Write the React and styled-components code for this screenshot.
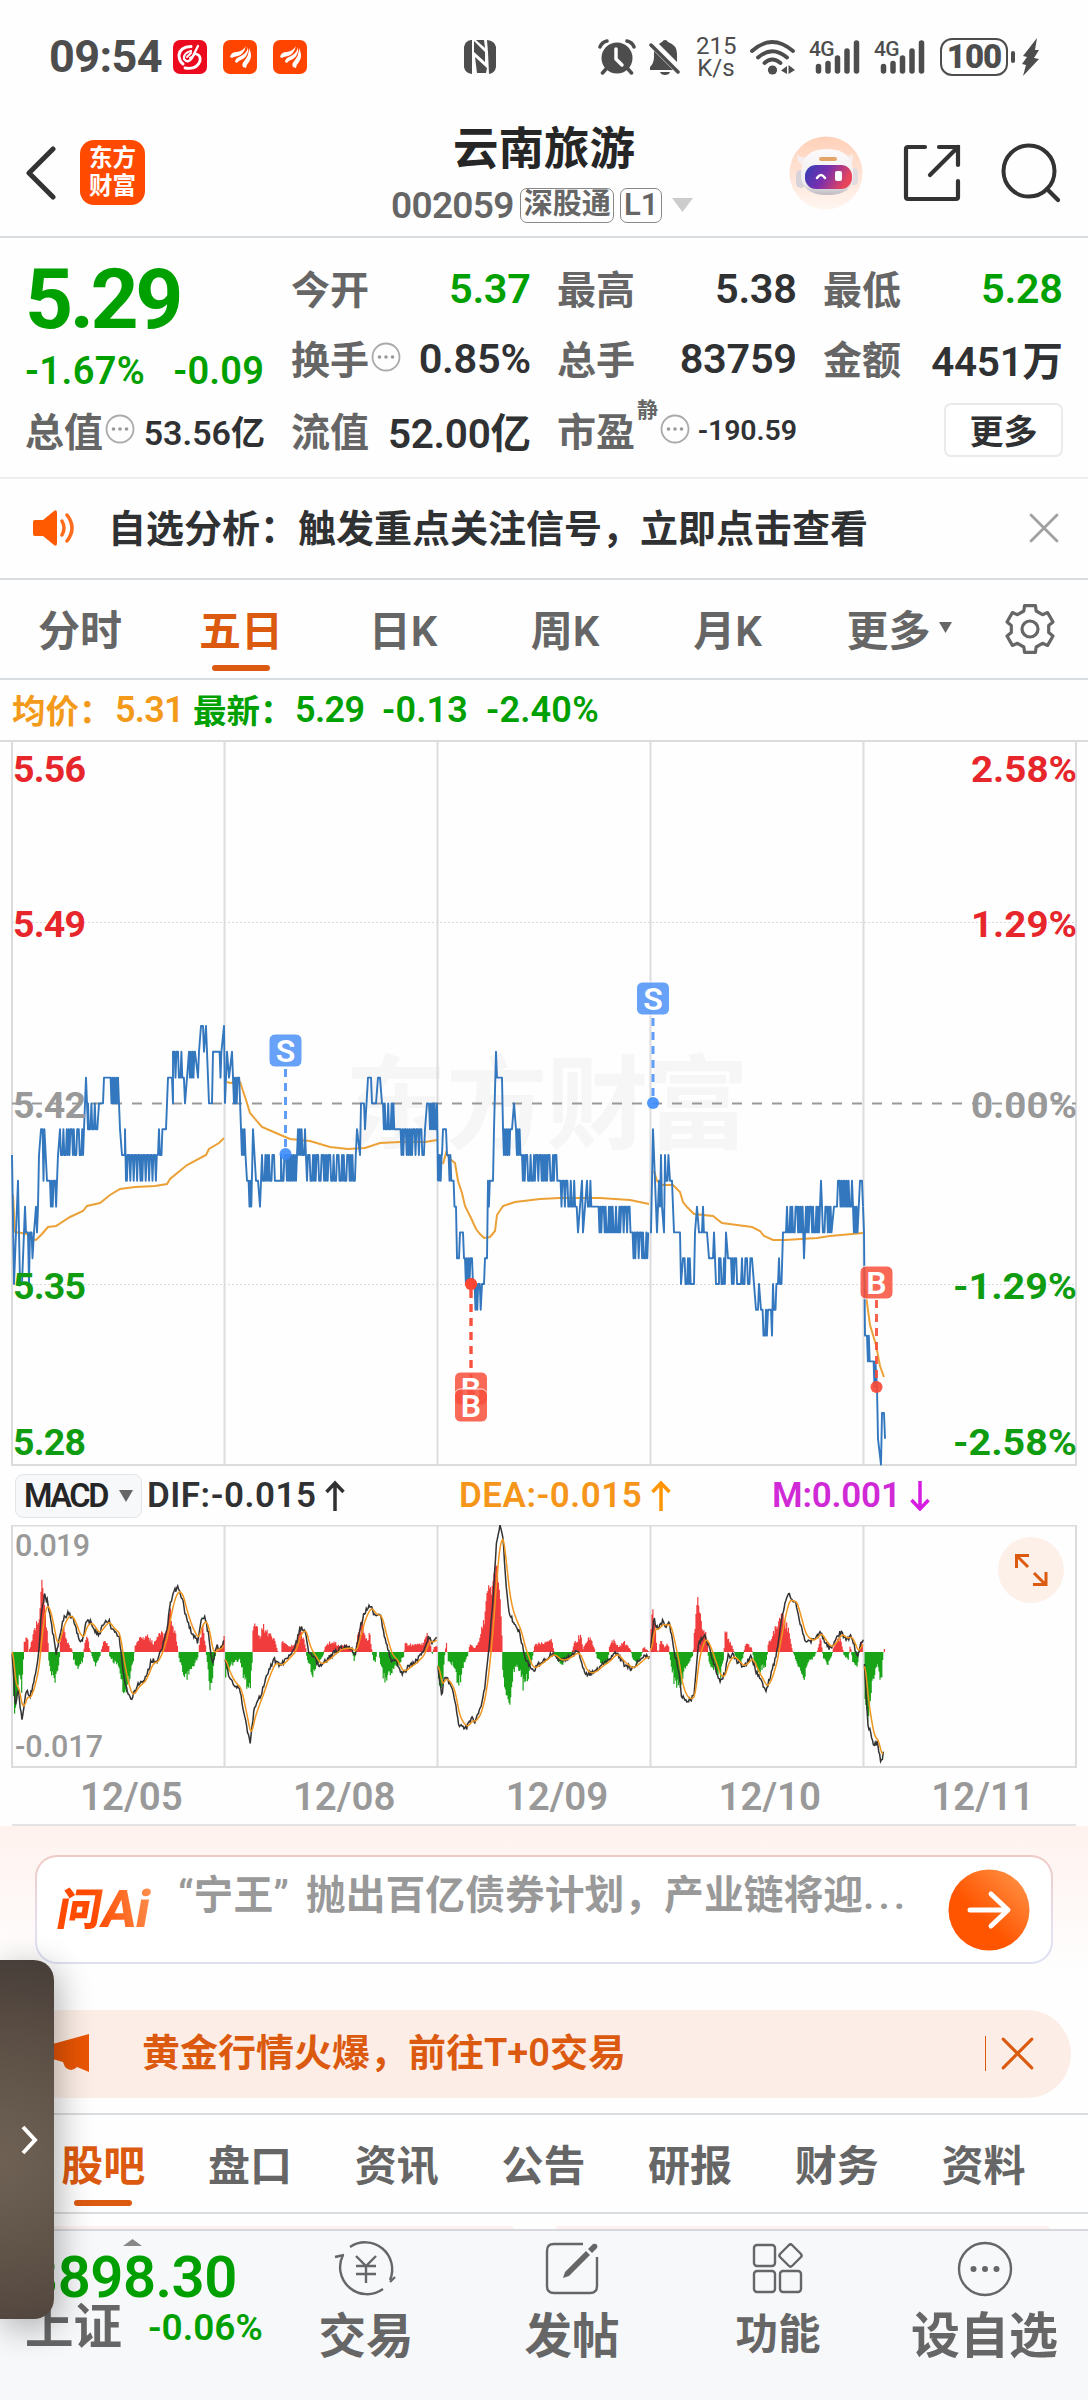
import React from "react"
import styled, { createGlobalStyle } from "styled-components"

const GlobalStyle = createGlobalStyle`
  body {
    margin: 0;
    background: #fefefe;
  }
  * {
    box-sizing: border-box;
  }
  svg {
    display: block;
    flex: none;
  }
`

const Screen = styled.div`
  position: relative;
  width: 1088px;
  height: 2400px;
  overflow: hidden;
  display: flex;
  flex-direction: column;
  background: #fefefe;
  color: #303133;
  font-family: Roboto, "Noto Sans CJK SC", sans-serif;
  font-weight: 600;
  white-space: nowrap;
`

const Num = styled.span`
  font-size: ${p => p.size}px;
  font-weight: ${p => p.weight || 600};
  letter-spacing: ${p => p.spacing || 0}px;
  margin-right: ${p => -(p.spacing || 0)}px;
  color: ${p => p.color || "inherit"};
`

/* ---------- status bar ---------- */

const StatusBar = styled.header`
  height: 114px;
  padding: 0 48px 0 50px;
  display: flex;
  align-items: center;
  color: #4d4d4d;
`

const Clock = styled.div`
  width: 124px;
  margin-left: -1px;
  padding-right: 1px;
  font-size: 45px;
  line-height: 48px;
  padding-bottom: 1px;
  font-weight: 700;
  letter-spacing: -0.6px;
`

const AppBadges = styled.div`
  display: flex;
  gap: 16px;
  width: 291px;
`

const StatusRight = styled.div`
  display: flex;
  align-items: center;
  margin-left: auto;
`

const Speed = styled.div`
  width: 40px;
  margin: 0 14px 0 15px;
  font-size: 24px;
  line-height: 22px;
  font-weight: 400;
  text-align: center;
`

const Battery = styled.div`
  position: relative;
  width: 68px;
  height: 38px;
  margin-left: 14px;
  border: 2.5px solid #4d4d4d;
  border-radius: 12px;
  font-size: 33px;
  line-height: 34px;
  font-weight: 900;
  text-align: center;
  letter-spacing: -1px;

  &::after {
    content: "";
    position: absolute;
    right: -9px;
    top: 11px;
    width: 4px;
    height: 12px;
    border-radius: 2px;
    background: #4d4d4d;
  }
`

function EastMoneyBadge() {
  return (
    <svg width="34" height="34" viewBox="0 0 34 34">
      <rect width="34" height="34" rx="7" fill="#ff4400" />
      <g fill="#fff">
        <path d="M7 17 Q8 12 14 12 Q20 11 23 6 Q21 14 15 16 Q10 17 9 18 Z" />
        <path d="M12 22 Q12 18 18 16 Q24 13 25 7 Q26 15 20 19 Q15 21 14 23 Z" />
        <path d="M20 27 Q18 24 22 20 Q26 15 26 8 Q30 16 26 22 Q23 25 23 28 Z" />
      </g>
    </svg>
  )
}

function RedBadge() {
  return (
    <svg width="34" height="34" viewBox="0 0 34 34">
      <rect width="34" height="34" rx="7" fill="#eb0a1e" />
      <g fill="none" stroke="#fff" strokeLinecap="round">
        <path d="M18 6.500 Q7 7 6 15 Q6 21 10 24" strokeWidth="3" />
        <path d="M18 11 Q10 13 11 19 Q15 24 19 18 L25 6" strokeWidth="2.300" />
        <path d="M14 17 L18 13 M17 18 Q22 16 22 12" strokeWidth="2" />
        <path d="M12 28 Q24 30 27 21 Q28 15 23 14" strokeWidth="2.800" />
      </g>
    </svg>
  )
}

function NfcIcon() {
  return (
    <svg width="32" height="34" viewBox="0 0 32 34">
      <path d="M7 0 H8 V34 Q1 33 0 27 V7 Q1 1 7 0 Z" fill="#4d4d4d" />
      <path d="M23 0 Q31 1 32 7 V27 Q31 33 25 34 L24 12 Z" fill="#4d4d4d" />
      <path d="M10 1 L21 12 V22 L10 12 Z M11 17 L23 28 L22 33 H13 Z" fill="#4d4d4d" />
      <path d="M12 0 H20 L21 8 Z" fill="#4d4d4d" />
    </svg>
  )
}

function AlarmIcon() {
  return (
    <svg width="38" height="36" viewBox="0 0 38 36">
      <circle cx="19" cy="19" r="15.500" fill="#4d4d4d" />
      <path d="M2 8 Q4 3 9 2 M36 8 Q34 3 29 2 M8 30 L4.500 34 M30 30 L33.500 34" stroke="#4d4d4d" strokeWidth="3.500" strokeLinecap="round" fill="none" />
      <path d="M18 10 V20 L24 26" stroke="#fff" strokeWidth="3.500" strokeLinecap="round" fill="none" />
    </svg>
  )
}

function BellOffIcon() {
  return (
    <svg width="32" height="36" viewBox="0 0 32 36">
      <path d="M10 5 Q11 4 13 3 Q14 1 16 1 Q18 1 19 3 Q28 6 28 15 V23 Z" fill="#4d4d4d" />
      <path d="M5 12 L24 31 H1 V28 Q5 24 5 18 Z M11 33 H21 Q20 36 16 36 Q12 36 11 33 Z" fill="#4d4d4d" />
      <path d="M2 6 L29 33" stroke="#4d4d4d" strokeWidth="3.500" strokeLinecap="round" />
    </svg>
  )
}

function WifiIcon() {
  return (
    <svg width="46" height="36" viewBox="0 0 46 36">
      <g fill="none" stroke="#4d4d4d" strokeWidth="3.800" strokeLinecap="round">
        <path d="M2 12 Q22 -6 43 12" />
        <path d="M8 18.500 Q22 6 37 18.500" />
        <path d="M14.500 24 Q22 17 30.500 24" />
      </g>
      <circle cx="22.500" cy="31" r="4.600" fill="#4d4d4d" />
      <path d="M31 31.500 L37 27 V35 Z M38.500 26 L45 31 L38.500 35 Z" fill="#4d4d4d" />
    </svg>
  )
}

const Cellular = styled.div`
  display: flex;
  width: 52px;
  height: 36px;
  margin-left: 13px;
  font-size: 21px;
  line-height: 21px;
  font-weight: 500;
  letter-spacing: -0.8px;

  svg {
    margin-left: -20px;
  }
`

function Signal() {
  return (
    <Cellular>
      4G
      <svg width="46" height="36" viewBox="6 0 46 36">
        <g stroke="#4d4d4d" strokeWidth="5.500" strokeLinecap="round">
          <path d="M10.500 27.500 V32 M20 24.500 V32 M29.500 19 V32 M39 12 V32 M48.500 4 V32" />
        </g>
      </svg>
    </Cellular>
  )
}

function Status() {
  return (
    <StatusBar>
      <Clock>09:54</Clock>
      <AppBadges>
        <RedBadge />
        <EastMoneyBadge />
        <EastMoneyBadge />
      </AppBadges>
      <NfcIcon />
      <StatusRight>
        <AlarmIcon />
        <svg width="13" height="1" />
        <BellOffIcon />
        <Speed>215<br />K/s</Speed>
        <WifiIcon />
        <Signal />
        <Signal />
        <Battery>100</Battery>
        <svg width="18" height="38" viewBox="0 0 18 38" style={{ marginLeft: 14 }}>
          <path d="M15 0 L1 18 L5 19 L0 26 L4 27 L1 38 L17 21 L12 20 L17 12 L13 12 Z" fill="#4d4d4d" />
        </svg>
      </StatusRight>
    </StatusBar>
  )
}

/* ---------- title bar ---------- */

const TitleBar = styled.div`
  height: 124px;
  border-bottom: 2px solid #dadddf;
  display: grid;
  grid-template-columns: 366px 1fr 366px;
`

const TitleSide = styled.div`
  display: flex;
  align-items: center;
  height: 117px;
  padding: 0 ${p => (p.end ? 27 : 0)}px 0 ${p => (p.end ? 0 : 25)}px;
  justify-content: ${p => (p.end ? "flex-end" : "flex-start")};
  gap: ${p => (p.end ? 40 : 23)}px;
`

const Logo = styled.div`
  width: 65px;
  height: 65px;
  border-radius: 14px;
  background: #ff4a00;
  color: #fff;
  font-size: 23.500px;
  line-height: 28px;
  font-weight: 700;
  text-align: center;
  padding-top: 4px;
`

const TitleText = styled.div`
  text-align: center;
  font-size: 45.500px;
  line-height: 60px;
  font-weight: 700;
  color: #262626;
  margin-top: 6px;
`

const CodeRow = styled.div`
  display: flex;
  align-items: center;
  height: 36px;
  margin-top: 7px;
  padding-left: 25px;
  color: #666;
`

const Tag = styled.span`
  height: 35px;
  width: ${p => p.w}px;
  margin-left: 6px;
  border: 1.500px solid #888;
  border-radius: 7px;
  font-size: ${p => p.size || 29}px;
  line-height: ${p => (p.size ? 32 : 30)}px;
  text-align: center;
`

function Header() {
  return (
    <TitleBar>
      <TitleSide>
        <svg width="32" height="54" viewBox="0 0 32 54">
          <path d="M28 3 L4 27 L28 51" fill="none" stroke="#333" strokeWidth="5" strokeLinecap="round" strokeLinejoin="round" />
        </svg>
        <Logo>东方<br />财富</Logo>
      </TitleSide>
      <div>
        <TitleText>云南旅游</TitleText>
        <CodeRow>
          <Num size={37} spacing={-0.7}>002059</Num>
          <Tag w={94}>深股通</Tag>
          <Tag w={42} size={31}>L1</Tag>
          <svg width="21" height="14" viewBox="0 0 21 14" style={{ marginLeft: 10 }}>
            <path d="M0 0 H21 L10.500 14 Z" fill="#ccc" />
          </svg>
        </CodeRow>
      </div>
      <TitleSide end>
        <svg width="74" height="74" viewBox="0 0 74 74">
          <defs>
            <linearGradient id="halo" x1="0" y1="0" x2="0" y2="1">
              <stop offset="0" stopColor="#ffd0b8" />
              <stop offset="1" stopColor="#fff6f1" />
            </linearGradient>
            <linearGradient id="visor" x1="0" y1="0" x2="1" y2="0.300">
              <stop offset="0" stopColor="#2f3fb4" />
              <stop offset="0.500" stopColor="#7a2fae" />
              <stop offset="1" stopColor="#e8455a" />
            </linearGradient>
            <linearGradient id="helmet" x1="0" y1="0" x2="0" y2="1">
              <stop offset="0" stopColor="#fcfafa" />
              <stop offset="0.750" stopColor="#efecee" />
              <stop offset="1" stopColor="#bdb9c0" />
            </linearGradient>
          </defs>
          <circle cx="37" cy="37" r="36.500" fill="url(#halo)" />
          <path d="M8 18 Q7 28 16 29 L22 20 Q12 24 8 18 Z M63 17 Q66 27 60 30 L54 20 Q61 22 63 17 Z" fill="#f6eeee" />
          <rect x="7" y="34" width="10" height="18" rx="5" fill="#d8d3d8" />
          <rect x="60" y="32" width="9" height="17" rx="4" fill="#e2dce0" />
          <path d="M12 38 Q12 13 38 13 Q64 13 64 37 Q66 59 38 59 Q12 59 12 38 Z" fill="url(#helmet)" />
          <rect x="30" y="21" width="18" height="4" rx="2" fill="#e2a468" />
          <rect x="16" y="29" width="47" height="24" rx="11" fill="url(#visor)" />
          <path d="M28 42 Q32 36 36 42" stroke="#fff" strokeWidth="2.500" fill="none" strokeLinecap="round" />
          <rect x="46" y="35" width="7" height="10" rx="2" fill="#fff" />
        </svg>
        <svg width="58" height="58" viewBox="0 0 58 58">
          <path d="M22 3 H5 Q3 3 3 5 V53 Q3 55 5 55 H53 Q55 55 55 53 V37 M36 3 H55 V21 M55 3 L27 31" fill="none" stroke="#333" strokeWidth="4.200" strokeLinecap="round" />
        </svg>
        <svg width="60" height="60" viewBox="0 0 60 60">
          <circle cx="28" cy="28" r="25.500" fill="none" stroke="#333" strokeWidth="4" />
          <path d="M46 46 L57 57" stroke="#333" strokeWidth="4.200" strokeLinecap="round" />
        </svg>
      </TitleSide>
    </TitleBar>
  )
}

/* ---------- quote block ---------- */

const GREEN = "#00a000"

const QuoteGrid = styled.section`
  height: 241px;
  border-bottom: 2px solid #edefef;
  padding: 15px 24px 0 25px;
  display: grid;
  grid-template-columns: 240px 240px 240px 240px;
  column-gap: 26px;
  grid-template-rows: 70px 72px 72px;
`

const Cell = styled.div`
  display: flex;
  align-items: center;
  justify-content: space-between;
  height: 70px;
`

const Label = styled.span`
  display: flex;
  align-items: center;
  gap: 2px;
  font-size: 39px;
  padding-bottom: 3px;
  color: #666;
`

const Super = styled.sup`
  align-self: flex-start;
  margin-top: -2px;
  font-size: 21px;
  line-height: 22px;
`

const Price = styled.div`
  grid-row: 1 / 2;
  font-size: 84px;
  line-height: 93px;
  font-weight: 700;
  letter-spacing: -3.500px;
  color: ${GREEN};
`

const Change = styled.div`
  display: flex;
  justify-content: space-between;
  align-items: center;
  padding: 23px 1px 0 0;
  color: ${GREEN};
`

const MoreButton = styled.button`
  width: 119px;
  height: 54px;
  margin-left: auto;
  padding: 0 0 6px;
  border: 2px solid #e9eaeb;
  border-radius: 7px;
  background: #fff;
  color: #303133;
  font: inherit;
  font-size: 34px;
`

function Dots() {
  return (
    <svg width="30" height="30" viewBox="0 0 30 30">
      <circle cx="15" cy="15" r="13.500" fill="none" stroke="#aaa" strokeWidth="1.800" />
      <circle cx="8.500" cy="15" r="1.800" fill="#999" />
      <circle cx="15" cy="15" r="1.800" fill="#999" />
      <circle cx="21.500" cy="15" r="1.800" fill="#999" />
    </svg>
  )
}

function Stat({ label, value, color, size = 41.5, spacing = -0.3, dots, sup }) {
  return (
    <Cell>
      <Label>
        {label}
        {sup && <Super>{sup}</Super>}
        {dots && <Dots />}
      </Label>
      <Num size={size} spacing={spacing} color={color}>{value}</Num>
    </Cell>
  )
}

function Quote() {
  return (
    <QuoteGrid>
      <Price>5.29</Price>
      <Stat label="今开" value="5.37" color={GREEN} />
      <Stat label="最高" value="5.38" />
      <Stat label="最低" value="5.28" color={GREEN} />
      <Change>
        <Num size={38} spacing={0.4}>-1.67%</Num>
        <Num size={38} spacing={0.2}>-0.09</Num>
      </Change>
      <Stat label="换手" value="0.85%" dots />
      <Stat label="总手" value="83759" />
      <Stat label="金额" value="4451万" size={40.5} />
      <Stat label="总值" value="53.56亿" size={34} spacing={0} dots />
      <Stat label="流值" value="52.00亿" size={40.5} />
      <Stat label="市盈" value="-190.59" size={28.5} spacing={-0.1} sup="静" dots />
      <Cell>
        <MoreButton>更多</MoreButton>
      </Cell>
    </QuoteGrid>
  )
}

/* ---------- notice ---------- */

const NoticeBar = styled.div`
  height: 101px;
  border-bottom: 2px solid #dadddf;
  padding: 0 29px 1px 32px;
  display: flex;
  align-items: center;
  font-size: 38px;
`

const NoticeText = styled.span`
  flex: 1;
  margin-left: 32px;
  padding-bottom: 6px;
`

function CloseIcon({ size, color, weight }) {
  return (
    <svg width={size} height={size} viewBox="0 0 30 30">
      <path d="M2 2 L28 28 M28 2 L2 28" stroke={color} strokeWidth={weight} strokeLinecap="round" />
    </svg>
  )
}

function Notice() {
  return (
    <NoticeBar>
      <svg width="44" height="38" viewBox="0 0 44 38">
        <path d="M3 11 H11 L22 2 Q25 0 25 4 V34 Q25 38 22 36 L11 27 H3 Q1 27 1 25 V13 Q1 11 3 11 Z" fill="#ff5a00" />
        <path d="M30 12 Q34 19 30 26 M35 6 Q45 19 35 32" stroke="#ff6d1c" strokeWidth="3.500" fill="none" strokeLinecap="round" />
      </svg>
      <NoticeText>自选分析：触发重点关注信号，立即点击查看</NoticeText>
      <CloseIcon size={30} color="#a0a0a0" weight={2.8} />
    </NoticeBar>
  )
}

/* ---------- chart tabs ---------- */

const ChartTabs = styled.nav`
  height: 100px;
  border-bottom: 2px solid #dadddf;
  display: grid;
  grid-template-columns: 160px 162px 162px 162px 163px 180px 82px;
  align-items: center;
`

const Tab = styled.div`
  position: relative;
  height: 98px;
  display: flex;
  align-items: center;
  justify-content: center;
  font-size: 42px;
  padding-bottom: 3px;
  color: ${p => (p.active ? "#dc5a10" : "#666")};
  font-weight: ${p => (p.active ? 700 : 600)};

  &::after {
    content: "";
    display: ${p => (p.active ? "block" : "none")};
    position: absolute;
    bottom: 7px;
    left: 50%;
    margin-left: -29px;
    width: 58px;
    height: 6px;
    border-radius: 3px;
    background: #dc5a10;
  }
`

function gearPath() {
  const pts = []
  for (let i = 0; i < 6; i++) {
    const a = -90 + i * 60
    ;[[-13, 24], [13, 24], [19, 19], [41, 19]].forEach(([d, r]) => {
      const t = ((a + d) * Math.PI) / 180
      pts.push(`${(26 + r * Math.cos(t)).toFixed(1)},${(26 + r * Math.sin(t)).toFixed(1)}`)
    })
  }
  return pts.join(" ")
}

function Periods() {
  return (
    <ChartTabs>
      <Tab>分时</Tab>
      <Tab active>五日</Tab>
      <Tab>日K</Tab>
      <Tab>周K</Tab>
      <Tab>月K</Tab>
      <Tab>
        更多
        <svg width="13" height="11" viewBox="0 0 13 11" style={{ marginLeft: 8 }}>
          <path d="M0 0 H13 L6.500 11 Z" fill="#666" />
        </svg>
      </Tab>
      <svg width="52" height="52" viewBox="0 0 52 52" style={{ marginLeft: 15 }}>
        <polygon points={gearPath()} fill="none" stroke="#666" strokeWidth="3.200" strokeLinejoin="round" />
        <circle cx="26" cy="26" r="8" fill="none" stroke="#666" strokeWidth="3.200" />
      </svg>
    </ChartTabs>
  )
}

const Legend = styled.div`
  height: 60px;
  padding: 0 12px;
  display: flex;
  align-items: center;
  font-size: 33.500px;
  color: ${GREEN};
`

const LegendLabel = styled.span`
  width: ${p => p.w}px;
  padding-bottom: ${p => p.lift || 0}px;
  color: ${p => p.color || "inherit"};
`

/* ---------- price chart ---------- */

// price runs: x, cents above 5.00; "x1~x2 hi lo" is a stretch where the price flickers between two ticks
const PRICE_RUNS = [
  "12 40,14 35,18 39,20 35,22 35,25 38,26 37,28 37,29 35,30~33 37 36,34 37,36 38,37 37,38 38,39 40,41 41,41~45 41 39,47 39,49 39,50~57 39 38,58 40,60~84 41 40,84 41,86 43,88 41,88~98 42 41,99 42,103 42,104 43,109 43,109~118 43 42,118 43,120 41,122 40,125 40,125 41,126 39,126~157 40 39,158 40,159~163 41 40,164 41,166 41,168 43,172 43,173 42,173~184 44 43,185 42,187 43,189~195 44 43,198 43,199 44,201 45,203 45,204 44,206 45,207 44,209 42,212 42,213 44,217 44,218~222 44 43,224 45,225 42",
  "225 42,227 44,229 43,232 44,234 42,234~240 43 42,241~246 41 40,247~252 39 38,253 41,256 39,258 39,260 38,262~275 40 39,276 39,281 39,281~295 40 39,296 39,298~306 41 40,307 39,308~356 40 39,357 41,360 40,361 42,364 42,365 41,368 43,371 43,372 42,376 42,378 43,380 43,382 42,383~395 42 41,395 41,398 41,399~424 41 40,425 41,427 42,429 42,430 41,431~436 42 41,437 42,438 39",
  "438 39,438~442 40 39,443 41,446 41,447~452 40 39,452~456 39 38,457 36,459 36,460 37,463 37,464 36,465~472 36 35,473~481 35 34,482 35,484 35,485 36,487 36,488~492 39 38,493 39,494 41,496 44,497 43,502 43,503~511 41 40,512 41,514 42,516 41,516~521 41 40,522~558 40 39,559~577 39 38,578 37,580 38,582 39,583 37,585 38,587~593 39 38,597~631 38 37,631~649 37 36",
  "650 37,651 37,653 41,656 38,657 37,659 39,660 38,661 40,662 38,664 37,665~669 40 39,670 39,672 39,673 38,674 37,680 37,681 35,683~691 36 35,694 35,695 37,697 38,699 37,702 37,703~706 38 37,707 37,709 36,713 36,714 37,716 35,719 35,719~725 36 35,726 37,728 36,731 36,731~738 36 35,741 35,742~752 36 35,754 35,756 34,758 34,759 35,761 34,761~767 34 33,768 34,771 34,772 33,773~777 35 34,778 35,779~782 36 35,783 37,786 37,787~803 38 37,804 36,806~820 38 37,821 39,822~832 38 37,834 38,837 38,838~852 39 38,853~858 38 37,860 39,862 39,863 38",
  "863 38,864 37,865 33,867 33,867~872 33 32,872~876 32 31,877 31,878 29,881 28,882 30,884 30,885 29",
]

const AVERAGES = [
  "13,1195 15,1232 27,1234 31,1239 36,1240 42,1234 48,1227 56,1226 70,1217 83,1211 87,1206 100,1203 110,1195 120,1189 135,1187 155,1186 167,1184 170,1179 187,1165 206,1155 209,1149 219,1143 224,1138",
  "227,1082 230,1083 240,1082 246,1100 250,1113 262,1127 276,1133 290,1139 310,1141 330,1147 348,1149 365,1148 380,1143 400,1142 425,1142 437,1140",
  "443,1164 446,1153 450,1159 455,1163 458,1181 462,1193 465,1206 471,1218 476,1229 480,1234 484,1238 490,1237 495,1231 497,1215 503,1206 515,1202 540,1199 560,1198 600,1198 630,1200 649,1204",
  "654,1171 657,1181 662,1185 673,1185 680,1192 683,1202 687,1207 694,1214 713,1216 722,1223 752,1227 760,1231 764,1236 773,1240 785,1240 817,1238 830,1236 863,1233",
  "864,1275 867,1303 870,1325 876,1345 880,1366 884,1377",
]

const priceY = cents => 1103.4 - (cents - 42) * 25.8

// small repeatable noise so that the runs look the same on each render
const noise = n => {
  const v = Math.sin(n * 12.9898) * 43758.5453
  return v - Math.floor(v)
}

function pricePoints(runs) {
  const out = []
  runs.split(",").forEach(run => {
    const parts = run.split(" ")
    if (!parts[0].includes("~")) {
      out.push([Number(parts[0]), Number(parts[1])])
      return
    }
    const [from, to] = parts[0].split("~").map(Number)
    let up = true
    for (let x = from; x <= to; ) {
      out.push([x, Number(up ? parts[1] : parts[2])])
      const hold = noise(x) > 0.72 ? 1.6 : 0
      if (hold) out.push([Math.min(to, x + hold), Number(up ? parts[1] : parts[2])])
      x += 0.9 + hold
      up = !up
    }
  })
  return out.map(([x, c]) => `${x.toFixed(1)},${priceY(c).toFixed(1)}`).join(" ")
}

const DAY_LINES = [224.5, 437.5, 650.5, 863.5]

const AXIS = [
  ["5.56", "2.58%", 782, "#e6262b"],
  ["5.49", "1.29%", 937, "#e6262b"],
  ["5.42", "0.00%", 1117.5, "#999"],
  ["5.35", "-1.29%", 1298.5, "#109c10"],
  ["5.28", "-2.58%", 1454.5, "#109c10"],
]

function TradeMark({ kind, x, y, dot, from, to }) {
  const color = kind === "S" ? "#4f93f7" : "#f8503c"
  return (
    <g>
      <path d={`M${x} ${from} V${to}`} stroke={color} strokeWidth="3" strokeDasharray="8 6" opacity="0.9" />
      <circle cx={x} cy={dot} r="6" fill={kind === "S" ? "#3c8cfa" : "#fa4632"} opacity="0.9" />
      <rect x={x - 16.500} y={y} width="33" height="33" rx="6" fill={color} opacity="0.850" stroke="#fff" strokeWidth="1" />
      <text x={x} y={y + 28} textAnchor="middle" fontSize="32" fontWeight="600" fill="#fff">{kind}</text>
    </g>
  )
}

function PriceChart() {
  return (
    <svg width="1088" height="726" viewBox="0 740 1088 726">
      <text x="547" y="1141" textAnchor="middle" fontSize="102" fontWeight="700" fill="#f6f6f7" textLength="404">东方财富</text>
      <g stroke="#dcdcde" strokeWidth="2" fill="none">
        <path d="M0 741 H1088" />
        <path d="M12 741 V1465 H1076 V741" />
        {DAY_LINES.map(x => <path key={x} d={`M${x} 741 V1465`} />)}
      </g>
      <g stroke="#d9d9d9" strokeWidth="1" strokeDasharray="2 2">
        <path d="M12 922.500 H1076 M12 1284.500 H1076" />
      </g>
      <path d="M12 1103.500 H1076" stroke="#999" strokeWidth="2" strokeDasharray="10 10" />
      <g fill="none" stroke="#eba136" strokeWidth="2">
        {AVERAGES.map(p => <polyline key={p} points={p} />)}
      </g>
      <g fill="none" stroke="#3377be" strokeWidth="1.900" strokeLinejoin="round">
        {PRICE_RUNS.map(r => <polyline key={r} points={pricePoints(r)} />)}
      </g>
      <g fontSize="37.500" fontWeight="700">
        {AXIS.map(([price, pct, y, color]) => (
          <g key={price} fill={color}>
            <text x="13" y={y} textLength="73">{price}</text>
            <text x="1077" y={y} textAnchor="end" textLength={pct[0] === "-" ? 124 : 106} lengthAdjust="spacingAndGlyphs">{pct}</text>
          </g>
        ))}
      </g>
      <TradeMark kind="S" x={285.5} y={1034} from={1069} to={1150} dot={1154} />
      <TradeMark kind="S" x={653} y={982} from={1018} to={1100} dot={1103} />
      <TradeMark kind="B" x={471} y={1372} from={1290} to={1390} dot={1284} />
      <TradeMark kind="B" x={471} y={1389} from={1290} to={1372} dot={1284} />
      <TradeMark kind="B" x={876.5} y={1266} from={1300} to={1382} dot={1387} />
    </svg>
  )
}

/* ---------- macd ---------- */

const MacdRow = styled.div`
  height: 59px;
  padding-left: 15px;
  display: grid;
  grid-template-columns: 132px 312px 313px 1fr;
  align-items: center;
`

const MacdSelect = styled.div`
  width: 127px;
  height: 44px;
  border: 1.500px solid #e3e5e8;
  border-radius: 8px;
  background: #f7f8fa;
  display: flex;
  align-items: center;
  justify-content: center;
  gap: 12px;
  font-size: 32.500px;
  letter-spacing: -2.400px;
  color: #262626;
`

const MacdValue = styled.div`
  display: flex;
  align-items: center;
  gap: 9px;
  font-size: 35px;
  letter-spacing: ${p => p.spacing || 0.5}px;
  color: ${p => p.color};
`

function Arrow({ down, color }) {
  return (
    <svg width="20" height="31" viewBox="0 0 20 31">
      <path d={down ? "M10 1 V29 M1.500 20 L10 29 L18.500 20" : "M10 31 V3 M1.500 12 L10 3 L18.500 12"} fill="none" stroke={color} strokeWidth="3.500" />
    </svg>
  )
}

// samples "x:y" on the plot raster, y = 577 is the zero line; left and right half have their own raster
const DIF = [
  ["L", "34:577 43:743 51:690 61:778 75:690 83:718 97:655 108:590 115:470 125:407 133:425 145:500 158:585 165:545 176:478 193:460 205:480 222:540 234:535 241:480 256:490 275:528 290:495 303:480 316:512 333:525 345:640 355:690 368:722 385:675 405:660 425:600 440:605 455:560 467:510 478:425 490:390 500:385 512:420 520:470 535:515 553:545 565:478 575:475 583:520 595:612 608:560 618:570 628:535"],
  ["L", "630:600 640:650 655:675 672:690 685:770 700:853 712:745 722:725 735:690 750:640 768:600 785:620 800:600 825:570 840:505 855:510 865:580 880:595 895:620 915:600 935:580 955:565 980:565 995:580 1005:520 1020:460 1037:435 1050:470 1066:470 1080:550 1095:600 1110:605 1125:645 1145:620 1165:605 1185:580 1200:530 1212:550 1224:530"],
  ["L", "1226:620 1237:710 1245:645 1258:670 1270:700 1284:795 1307:805 1320:775 1330:785 1345:750 1358:680 1368:580 1380:420 1390:250 1399:195 1408:230 1415:350 1425:460 1440:490 1455:520 1470:590 1490:635 1510:612 1530:595 1548:580 1568:605 1583:600 1612:578 1620:578 1632:620 1640:645 1660:640 1685:615 1700:605 1725:578 1745:612 1770:628 1785:610 1808:588 1830:605 1848:642 1860:625 1819:632"],
  ["R", "317:570 325:475 337:510 350:485 360:500 370:490 385:580 397:640 405:710 424:725 440:710 447:620 453:550 473:525 485:570 500:620 515:665 528:645 537:590 552:585 565:605 580:625 605:590 620:640 647:690 660:650 675:590 690:490 700:440 712:400 722:425 733:430 742:480 757:540 780:545 803:515 815:550 830:568 845:545 861:515 875:540 890:530 908:590 920:545 925:545"],
  ["R", "928:620 938:790 955:860 965:845 976:912 984:870"],
]

const BARS = [
  ["L", "36:600 40:780 48:700 56:640 60:700 66:600 68:540 78:530 80:577 85:560 100:490 110:480 117:355 123:400 130:490 135:545 137:600 145:650 152:682 160:650 167:590 168:540 176:500 185:530 195:560 203:572 205:600 222:632 233:600 236:560 243:520 250:560 258:590 268:620 280:590 288:550 297:540 305:560 307:590 318:610 330:620 345:710 355:690 365:655 374:600 378:560 390:530 415:525 430:550 450:515 465:520 475:450 485:490 495:540 502:600 518:665 530:650 545:615 555:590 560:530 568:495 575:550 580:610 590:700 600:610 608:550 612:575 628:530"],
  ["L", "632:650 645:625 655:610 672:600 685:670 700:690 706:620 709:490 717:475 725:530 738:500 755:520 772:545 778:577 788:577 790:545 810:560 830:550 840:500 855:550 858:590 875:650 890:610 905:590 910:560 930:540 950:555 970:555 985:570 993:610 1000:530 1015:485 1025:540 1035:520 1040:560 1045:600 1052:610 1055:577 1062:577 1065:620 1080:680 1095:640 1115:620 1130:590 1135:550 1160:555 1185:550 1198:510 1205:550 1210:590 1215:560 1224:560"],
  ["L", "1228:680 1237:700 1243:610 1250:545 1255:610 1270:620 1285:685 1300:610 1310:590 1315:550 1330:565 1340:540 1355:480 1368:355 1376:390 1390:290 1398:370 1405:500 1409:680 1428:740 1437:640 1450:620 1466:690 1480:650 1490:600 1498:550 1520:550 1545:540 1550:570 1555:590 1562:590 1568:577"],
  ["R", "5:560 20:540 35:548 42:590 60:620 75:600 90:590 97:550 118:520 122:570 140:530 152:550 158:575 165:600 190:620 196:590 200:550 213:540 225:560 240:545 260:570 265:600 280:610 290:590 296:560 314:577"],
  ["R", "318:500 323:440 330:510 336:577 340:577 345:535 355:560 368:550 372:600 388:690 400:680 410:650 425:610 438:590 441:520 451:405 460:480 475:520 480:560 483:610 490:640 500:620 515:660 525:600 530:510 545:545 555:575 560:590 575:615 583:580 588:550 605:560 612:600 625:640 645:620 650:590 653:550 670:510 685:480 693:455 705:490 715:520 722:570 732:600 745:640 756:660 770:610 785:590 795:570 803:530 808:577 812:600 822:620 835:590 840:560 858:530 865:560 870:590 882:600 888:555 895:610 908:630 912:580 918:540 923:560"],
  ["R", "930:720 938:790 948:700 958:650 965:610 976:680 981:600 984:565"],
]

function readSamples([side, text]) {
  let last = -1
  return text
    .split(" ")
    .map(s => s.split(":").map(Number))
    .filter(([x]) => {
      if (x < last) return false
      last = x
      return true
    })
    .map(([x, y]) => [side === "L" ? x / 2.8 : 540 + x / 2.861, (577 - y) / 3])
}

function valueAt(points, x) {
  for (let i = 1; i < points.length; i++) {
    const [x0, v0] = points[i - 1]
    const [x1, v1] = points[i]
    if (x <= x1) return v0 + ((v1 - v0) * (x - x0)) / (x1 - x0 || 1)
  }
  return points[points.length - 1][1]
}

const ZERO = 1652

function macdLines(series) {
  const points = readSamples(series)
  const start = points[0][0]
  const lastX = points[points.length - 1][0]
  const end = start < 440 ? Math.min(lastX, 649.5) : lastX
  const dif = []
  const dea = []
  let smooth = points[0][1]
  for (let x = start; x <= end; x += 0.9) {
    const v = valueAt(points, x)
    smooth += (v - smooth) * 0.24
    dif.push(`${x.toFixed(1)},${(ZERO - v - (noise(x) - 0.5) * 5).toFixed(1)}`)
    dea.push(`${x.toFixed(1)},${(ZERO - smooth).toFixed(1)}`)
  }
  return { dif: dif.join(" "), dea: dea.join(" ") }
}

function macdBars(series) {
  const points = readSamples(series)
  let red = ""
  let green = ""
  for (let x = points[0][0]; x <= points[points.length - 1][0] + 0.5; x += 0.88) {
    const v = valueAt(points, x)
    const h = v * (Math.abs(v) > 40 ? 0.9 + noise(x) * 0.1 : 0.7 + noise(x) * 0.4)
    const bar = `M${x.toFixed(1)} ${ZERO} V${(ZERO - h).toFixed(1)}`
    if (v > 0) red += bar
    else green += bar
  }
  return { red, green }
}

const lines = DIF.map(macdLines)
const bars = BARS.map(macdBars)

function MacdChart() {
  return (
    <svg width="1088" height="243" viewBox="0 1525 1088 243">
      <g stroke="#dcdcde" strokeWidth="2" fill="none">
        <path d="M12 1525.500 H1076 V1767 H12 Z" />
        {DAY_LINES.map(x => <path key={x} d={`M${x} 1525 V1767`} />)}
      </g>
      {bars.map((b, i) => (
        <g key={i} strokeWidth="1.200">
          <path d={b.red} stroke="#f03c3c" />
          <path d={b.green} stroke="#18a318" />
        </g>
      ))}
      {lines.map((l, i) => (
        <g key={i} fill="none" strokeWidth="1.500">
          <polyline points={l.dif} stroke="#333" />
          <polyline points={l.dea} stroke="#f0961e" />
        </g>
      ))}
      <g fontSize="30.500" fontWeight="500" fill="#999">
        <text x="15" y="1555.500" textLength="75">0.019</text>
        <text x="15" y="1757" textLength="88">-0.017</text>
      </g>
      <circle cx="1031" cy="1570" r="33" fill="#fdf0e9" />
      <path d="M1016.500 1568 V1555.500 H1029 M1017 1556 L1028 1567 M1046 1572 V1584.500 H1033 M1045 1584 L1034 1573" fill="none" stroke="#dc5a10" strokeWidth="3" />
    </svg>
  )
}

const Dates = styled.div`
  height: 58px;
  margin: 0 12px;
  padding: 0 0 0 13px;
  border-bottom: 2px solid #e2e3e4;
  display: grid;
  grid-template-columns: repeat(5, 212.800px);
  align-items: center;
  text-align: center;
  font-size: 38.500px;
  color: #999;
`

/* ---------- promo area ---------- */

const AiSection = styled.div`
  height: 184px;
  padding: 29px 35px 0;
  background: linear-gradient(#fff2ee, #fefefe 80%);
`

const AiCard = styled.div`
  height: 109px;
  border: 2px solid transparent;
  border-radius: 22px;
  background: linear-gradient(#fff, #fff) padding-box, linear-gradient(#efc9c4, #e4e0ee 70%, #dce0f2) border-box;
  display: flex;
  align-items: center;
  padding: 0 21px 0 19px;
`

const AiLogo = styled.div`
  display: flex;
  align-items: center;
  width: 98px;
  height: 60px;
  padding-left: 2px;
  transform: skewX(-10deg);
  background: linear-gradient(70deg, #ff4a00 40%, #ff9a5a);
  background-clip: text;
  color: transparent;
  font-size: 44px;
  line-height: 60px;
  font-weight: 900;

  span {
    font-size: 52px;
    letter-spacing: -1px;
    font-weight: 800;
  }
`

const AiText = styled.div`
  flex: 1;
  padding: 0 0 28px 24px;
  font-size: 39.800px;
  line-height: 58px;
  color: #999;
`

const Gap = styled.span`
  letter-spacing: ${p => p.w}px;
`

const BannerWrap = styled.div`
  height: 103px;
  padding: 0 17px 15px;
`

const Banner = styled.div`
  height: 88px;
  border-radius: 44px;
  background: #fceee6;
  display: flex;
  align-items: center;
  padding: 0 37px 2px 22px;
  font-size: 38px;
  color: #dc5a10;
`

const BannerText = styled.span`
  flex: 1;
  margin-left: 51px;
  padding-bottom: 7px;
`

const Divider = styled.i`
  width: 1.500px;
  height: 35px;
  margin-right: 15px;
  background: #dc5a10;
`

function Promo() {
  return (
    <>
      <AiSection>
        <AiCard>
          <AiLogo>问<span>Ai</span></AiLogo>
          <AiText>“宁王<Gap w={17}>”</Gap>抛出百亿债券计划，产业链将迎<Gap w={4}>...</Gap></AiText>
          <svg width="82" height="82" viewBox="0 0 82 82">
            <defs>
              <linearGradient id="go" x1="0" y1="1" x2="1" y2="0">
                <stop offset="0.400" stopColor="#ff5500" />
                <stop offset="1" stopColor="#ff9a50" />
              </linearGradient>
            </defs>
            <circle cx="41" cy="41" r="40.500" fill="url(#go)" />
            <path d="M22 41 H59 M43 25 L60 41 L43 57" fill="none" stroke="#fff" strokeWidth="5" strokeLinecap="round" strokeLinejoin="round" />
          </svg>
        </AiCard>
      </AiSection>
      <BannerWrap>
        <Banner>
          <svg width="52" height="40" viewBox="0 0 52 40">
            <path d="M10 12 L50 1 V39 L38 34 Q32 40 26 34 L24 29 L10 25 Z" fill="#ea5504" />
          </svg>
          <BannerText>黄金行情火爆，前往T+0交易</BannerText>
          <Divider />
          <CloseIcon size={33} color="#dc5a10" weight={2.8} />
        </Banner>
      </BannerWrap>
    </>
  )
}

const InfoTabs = styled.nav`
  height: 101px;
  border-top: 2px solid #dadddf;
  border-bottom: 2px solid #dadddf;
  padding-left: 30px;
  display: grid;
  grid-template-columns: repeat(7, 146.700px);
`

const Peek = styled.div`
  height: 15px;
  padding: 12px 38px 0 20px;
  display: grid;
  grid-template-columns: 1fr 1fr;
  gap: 42px;

  i {
    border-radius: 16px 16px 0 0;
    background: #fdf0f0;
  }
`

/* ---------- bottom bar ---------- */

const BottomBar = styled.footer`
  flex: 1;
  border-top: 2px solid #d6d8db;
  background: #f7f8fa;
  display: grid;
  grid-template-columns: 263px 206px 206px 206px 207px;
  color: #666;
`

const IndexBox = styled.div`
  padding: 8px 0 0 25px;
`

const IndexValue = styled.div`
  font-size: 58px;
  line-height: 62px;
  height: 52px;
  letter-spacing: -0.500px;
  color: ${GREEN};
`

const IndexRow = styled.div`
  display: flex;
  align-items: center;
  gap: 26px;
  font-size: 48.500px;
  line-height: 60px;
`

const Action = styled.div`
  display: flex;
  flex-direction: column;
  align-items: center;
  padding-top: 7px;
  font-size: ${p => p.size || 47.5}px;
  line-height: ${p => p.lh || 74}px;

  svg {
    height: 62px;
  }
`

function BottomNav() {
  return (
    <BottomBar>
      <IndexBox>
        <svg width="19" height="7" viewBox="0 0 19 7" style={{ marginLeft: 98 }}>
          <path d="M9.500 0 L19 7 H0 Z" fill="#888" />
        </svg>
        <IndexValue>3898.30</IndexValue>
        <IndexRow>
          上证
          <Num size={37} spacing={0} color={GREEN}>-0.06%</Num>
        </IndexRow>
      </IndexBox>
      <Action>
        <svg width="64" height="62" viewBox="0 0 64 62">
          <g fill="none" stroke="#666" strokeWidth="2.400">
            <path d="M16 9 A27 27 0 0 1 56 42 M56 44 L61 39" />
            <path d="M49 51 A27 27 0 0 1 9 17 M10 17 L1 19" />
            <path d="M22 18 L32 28 L42 18 M32 28 V45 M22 28 H42 M22 36 H42" />
          </g>
        </svg>
        交易
      </Action>
      <Action>
        <svg width="54" height="62" viewBox="0 0 54 62">
          <path d="M38 6 H9 Q2 6 2 13 V48 Q2 55 9 55 H45 Q52 55 52 48 V19" fill="none" stroke="#666" strokeWidth="2.400" />
          <path d="M41 13 L45 17 L24 38 L18 40 L20 34 Z M43 11 L48 6 Q51 5 52 7 Q53 9 52 10 L47 15 Z" fill="#666" />
        </svg>
        发帖
      </Action>
      <Action size={42.5} lh={70}>
        <svg width="54" height="62" viewBox="0 0 54 62">
          <g fill="none" stroke="#666" strokeWidth="2.400">
            <rect x="3" y="7" width="21" height="21" rx="3" />
            <rect x="3" y="33" width="21" height="21" rx="3" />
            <rect x="29" y="33" width="21" height="21" rx="3" />
            <rect x="31" y="9" width="17" height="17" rx="2.500" transform="rotate(45 39.500 17.500)" />
          </g>
        </svg>
        功能
      </Action>
      <Action size={49}>
        <svg width="56" height="62" viewBox="0 0 56 62">
          <circle cx="28" cy="31" r="26" fill="none" stroke="#666" strokeWidth="2.400" />
          <g fill="#666">
            <circle cx="16.500" cy="31" r="3" />
            <circle cx="28" cy="31" r="3" />
            <circle cx="39.500" cy="31" r="3" />
          </g>
        </svg>
        设自选
      </Action>
    </BottomBar>
  )
}

const Drawer = styled.div`
  position: absolute;
  left: 0;
  top: 1960px;
  width: 54px;
  height: 359px;
  border-radius: 0 20px 20px 0;
  background: radial-gradient(circle at 0 200px, #6f6255, #5a4d43 130px, #483f3a 200px);
  box-shadow: 4px 8px 34px rgba(0, 0, 0, 0.32);
  display: flex;
  align-items: center;
  justify-content: center;
  padding-left: 3px;
`

function App() {
  return (
    <Screen>
      <GlobalStyle />
      <Status />
      <Header />
      <Quote />
      <Notice />
      <Periods />
      <Legend>
        <LegendLabel w={103} lift={3} color="#f39a1a">均价：</LegendLabel>
        <LegendLabel w={78} color="#f39a1a"><Num size={36} spacing={-0.8}>5.31</Num></LegendLabel>
        <LegendLabel w={102} lift={3}>最新：</LegendLabel>
        <LegendLabel w={87}><Num size={36} spacing={-0.6}>5.29</Num></LegendLabel>
        <LegendLabel w={104}><Num size={36} spacing={0.2}>-0.13</Num></LegendLabel>
        <Num size={36} spacing={0.2}>-2.40%</Num>
      </Legend>
      <PriceChart />
      <MacdRow>
        <MacdSelect>
          MACD
          <svg width="14" height="12" viewBox="0 0 14 12">
            <path d="M0 0 H14 L7 12 Z" fill="#666" />
          </svg>
        </MacdSelect>
        <MacdValue color="#303133">DIF:-0.015<Arrow color="#303133" /></MacdValue>
        <MacdValue color="#f5961a">DEA:-0.015<Arrow color="#ff9500" /></MacdValue>
        <MacdValue color="#d02ad6" spacing={-0.2}>M:0.001<Arrow down color="#d61ee0" /></MacdValue>
      </MacdRow>
      <MacdChart />
      <Dates>
        <span>12/05</span>
        <span>12/08</span>
        <span>12/09</span>
        <span>12/10</span>
        <span>12/11</span>
      </Dates>
      <Promo />
      <InfoTabs>
        <Tab active>股吧</Tab>
        <Tab>盘口</Tab>
        <Tab>资讯</Tab>
        <Tab>公告</Tab>
        <Tab>研报</Tab>
        <Tab>财务</Tab>
        <Tab>资料</Tab>
      </InfoTabs>
      <Peek>
        <i />
        <i />
      </Peek>
      <BottomNav />
      <Drawer>
        <svg width="18" height="30" viewBox="0 0 18 30">
          <path d="M3 2 L15 15 L3 28" fill="none" stroke="#fff" strokeWidth="4" />
        </svg>
      </Drawer>
    </Screen>
  )
}

export default App
